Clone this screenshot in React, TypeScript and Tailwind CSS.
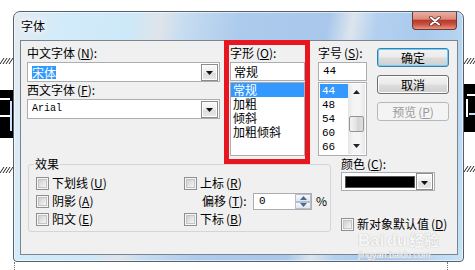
import React from 'react';

const cjk = "font-['Noto_Sans_CJK_SC',sans-serif]";

function Mn({ k }: { k: string }) {
  return (
    <span className="ml-[2px]">
      (<span className="underline underline-offset-[1px]">{k}</span>)
    </span>
  );
}

function DropButton({ className = '' }: { className?: string }) {
  return (
    <span
      className={`flex h-[17px] w-[17px] shrink-0 items-center justify-center border border-[#8c8c8c] bg-[linear-gradient(#fbfbfb,#ececec_50%,#dcdcdc_51%,#e8e8e8)] shadow-[inset_0_0_0_1px_#ffffff] ${className}`}
    >
      <svg width="7" height="4" viewBox="0 0 7 4" className="mt-[2px]">
        <path d="M0 0h7L3.5 4z" fill="#111" />
      </svg>
    </span>
  );
}

function Check() {
  return (
    <span className="flex h-[13px] w-[13px] shrink-0 items-center justify-center border border-[#8f8f8f] bg-[#f6f6f6]">
      <span className="h-[9px] w-[9px] border border-[#c4c4c4] bg-[linear-gradient(135deg,#cfcfcf,#f6f6f6)]" />
    </span>
  );
}

function Btn({ children, kind = 'normal' }: { children: React.ReactNode; kind?: 'default' | 'normal' | 'disabled' }) {
  const look =
    kind === 'default'
      ? 'border-[#3c7fb1] text-black shadow-[inset_0_0_0_1px_#6fd0f6] bg-[linear-gradient(#f4f4f4,#ebebeb_48%,#dddddd_52%,#cfcfcf)]'
      : kind === 'disabled'
        ? 'border-[#b4b8bb] text-[#9a9a9a] bg-[#f4f4f4]'
        : 'border-[#707070] text-black shadow-[inset_0_0_0_1px_#fcfcfc] bg-[linear-gradient(#f2f2f2,#ebebeb_48%,#dddddd_52%,#cfcfcf)]';
  return (
    <div className={`flex h-[19px] w-[72px] items-center justify-center rounded-[3px] border ${look}`}>
      {children}
    </div>
  );
}

function Hatch({ className }: { className: string }) {
  return (
    <svg width="13" height="6" viewBox="0 0 13 6" className={`absolute ${className}`}>
      <path d="M0 6L4 0M3 6L7 0M6 6L10 0M9 6L13 0" stroke="#222" strokeWidth="1" />
    </svg>
  );
}

function Backdrop() {
  return (
    <>
      <Hatch className="left-0 top-[58px]" />
      <Hatch className="left-0 top-[167px]" />
      <Hatch className="left-[464px] top-[58px]" />
      <Hatch className="left-[464px] top-[166px]" />
      <div className="absolute left-0 top-[90px] h-[48px] w-[13px] bg-black">
        <div className="mt-[8px] h-[2px] w-[10px] bg-white" />
        <div className="ml-[10px] mt-[1px] h-[30px] w-[2px] bg-[#cfe2ff]" />
        <div className="-mt-[16px] h-[2px] w-[10px] bg-white" />
      </div>
      <div className="absolute left-[463px] top-[84px] h-[48px] w-[12px] bg-black">
        <div className="ml-[4px] mt-[10px] h-[2px] w-[8px] bg-white" />
        <div className="ml-[3px] mt-[3px] h-[18px] w-[2px] bg-white" />
        <div className="ml-[6px] -mt-[4px] h-[2px] w-[6px] bg-[#bfe0ff]" />
      </div>
      <div className="absolute left-[14px] top-[262px] h-[8px] border-l border-dotted border-[#777]" />
      <div className="absolute left-[447px] top-[262px] h-[8px] border-l border-dotted border-[#777]" />
    </>
  );
}

function CloseButton() {
  return (
    <div className="ml-auto mr-[6px] flex h-[18px] w-[45px] items-center justify-center rounded-b-[4px] border border-t-0 border-[#6b3a35] bg-[linear-gradient(#eab0a4,#dc8a78_42%,#b8392c_50%,#c9503f_72%,#e7947f)]">
      <svg width="12" height="10" viewBox="0 0 12 10">
        <path d="M2 1.5L10 8.5M10 1.5L2 8.5" stroke="#5a2a25" strokeWidth="3.6" strokeLinecap="round" />
        <path d="M2 1.5L10 8.5M10 1.5L2 8.5" stroke="#ffffff" strokeWidth="2" strokeLinecap="round" />
      </svg>
    </div>
  );
}

function SizeList() {
  const sizes = ['44', '48', '54', '60', '66'];
  return (
    <div className="mt-[1px] flex h-[74px] border border-[#abadb3] bg-white p-[1px]">
      <div className="flex-1">
        {sizes.map((s, i) => (
          <div
            key={s}
            className={`h-[14px] pl-[2px] font-['Liberation_Mono',monospace] text-[11px] leading-[14px] ${i === 0 ? 'bg-[#3399ff] text-white' : ''}`}
          >
            {s}
          </div>
        ))}
      </div>
      <div className="flex w-[17px] flex-col bg-[linear-gradient(90deg,#e6e6e6,#f5f5f5_30%,#f5f5f5_70%,#e6e6e6)]">
        <div className="flex h-[16px] items-center justify-center">
          <svg width="7" height="4" viewBox="0 0 7 4">
            <path d="M0 4h7L3.5 0z" fill="#222" />
          </svg>
        </div>
        <div className="mx-[1px] mt-[16px] h-[16px] rounded-[2px] border border-[#959595] bg-[linear-gradient(90deg,#f3f3f3,#e2e2e2_50%,#d4d4d4_51%,#dedede)]" />
        <div className="mt-auto flex h-[16px] items-center justify-center">
          <svg width="7" height="4" viewBox="0 0 7 4">
            <path d="M0 0h7L3.5 4z" fill="#222" />
          </svg>
        </div>
      </div>
    </div>
  );
}

function Spinner() {
  return (
    <div className="flex h-[17px] w-[59px] border border-[#abadb3] bg-white">
      <span className="flex-1 pl-[5px] font-['Liberation_Mono',monospace] text-[11px] leading-[15px]">0</span>
      <div className="flex w-[16px] flex-col">
        {[0, 1].map((i) => (
          <div
            key={i}
            className="flex flex-1 items-center justify-center border border-[#b7c0ca] bg-[linear-gradient(#f7f9fb,#e0e6ec)]"
          >
            <svg width="7" height="4" viewBox="0 0 7 4">
              <path d={i === 0 ? 'M0 4h7L3.5 0z' : 'M0 0h7L3.5 4z'} fill="#4a6a98" />
            </svg>
          </div>
        ))}
      </div>
    </div>
  );
}

export default function App() {
  return (
    <div className={`relative h-[270px] w-[475px] overflow-hidden bg-white pl-[13px] pt-[11px] text-[12px] leading-[14px] text-black ${cjk}`}>
      <Backdrop />

      <div className="relative flex h-[251px] w-[451px] flex-col rounded-b-[4px] rounded-t-[7px] border border-[#56616c] bg-[linear-gradient(100deg,#e6ebf0_0%,#d2ebfa_10%,#cde8f8_24%,#dfe4ea_30%,#c6dcf1_35%,#adcbec_46%,#a8c7eb_64%,#dce5ee_69%,#b3d0ef_74%,#aac9ec_84%,#c6e3f7_100%)] shadow-[inset_0_0_0_1px_rgba(255,255,255,0.55)]">
        <div className="flex h-[28px] shrink-0 items-start">
          <span className="ml-[7px] mt-[7px] [text-shadow:0_0_6px_#ffffff,0_0_6px_#ffffff]">字体</span>
          <CloseButton />
        </div>

        <div className="ml-[6px] mr-[5px] h-[215px] border border-[#7a8590] bg-[#f0f0f0]">
          <div className="flex pl-[6px] pt-[5px]">
            <div className="w-[193px]">
              <div className="h-[16px]">
                中文字体<Mn k="N" />:
              </div>
              <div className="flex h-[20px] items-center border border-[#abadb3] bg-white pl-[4px] pr-[1px]">
                <span className="bg-[#3399ff] leading-[13px] text-white">宋体</span>
                <DropButton className="ml-auto" />
              </div>
              <div className="h-[17px] pt-[1px]">
                西文字体<Mn k="F" />:
              </div>
              <div className="flex h-[20px] items-center border border-[#abadb3] bg-white pl-[4px] pr-[1px]">
                <span className="font-['Liberation_Mono',monospace] text-[10px]">Arial</span>
                <DropButton className="ml-auto" />
              </div>
            </div>

            <div className="ml-[10px] w-[75px]">
              <div className="h-[16px]">
                字形<Mn k="O" />:
              </div>
              <div className="h-[19px] border border-[#abadb3] bg-white pl-[3px] pt-[2px]">常规</div>
              <div className="mt-[1px] h-[74px] border border-[#abadb3] bg-white">
                {['常规', '加粗', '倾斜', '加粗倾斜'].map((s, i) => (
                  <div key={s} className={`h-[14px] pl-[2px] ${i === 0 ? 'bg-[#3399ff] text-white' : ''}`}>
                    {s}
                  </div>
                ))}
              </div>
            </div>

            <div className="ml-[13px] w-[49px]">
              <div className="h-[16px]">
                字号<Mn k="S" />:
              </div>
              <div className="h-[19px] border border-[#abadb3] bg-white pl-[4px] font-['Liberation_Mono',monospace] text-[11px] leading-[17px]">
                44
              </div>
              <SizeList />
            </div>

            <div className="ml-[10px] flex flex-col gap-[8px] pt-[2px]">
              <Btn kind="default">确定</Btn>
              <Btn>取消</Btn>
              <Btn kind="disabled">
                预览<Mn k="P" />
              </Btn>
            </div>
          </div>

          <div className="mt-[1px] flex pl-[7px]">
            <div className="relative w-[303px] pt-[7px]">
              <span className="absolute left-[6px] top-0 bg-[#f0f0f0] px-[1px]">效果</span>
              <div className="h-[68px] rounded-[3px] border border-[#d5d5d5] pl-[7px] pt-[12px]">
                <div className="grid grid-cols-[148px_1fr] grid-rows-[18px_18px_18px]">
                  <div className="flex items-start gap-[3px]">
                    <Check />
                    <span className="-mt-[1px]">
                      下划线<Mn k="U" />
                    </span>
                  </div>
                  <div className="flex items-start gap-[3px]">
                    <Check />
                    <span className="-mt-[1px]">
                      上标<Mn k="R" />
                    </span>
                  </div>
                  <div className="flex items-start gap-[3px]">
                    <Check />
                    <span className="-mt-[1px]">
                      阴影<Mn k="A" />
                    </span>
                  </div>
                  <div className="-mt-[2px] flex items-start">
                    <span className="ml-[18px] w-[51px] pt-[1px]">
                      偏移<Mn k="T" />:
                    </span>
                    <Spinner />
                    <span className="ml-[4px] pt-[1px]">%</span>
                  </div>
                  <div className="flex items-start gap-[3px]">
                    <Check />
                    <span className="-mt-[1px]">
                      阳文<Mn k="E" />
                    </span>
                  </div>
                  <div className="flex items-start gap-[3px]">
                    <Check />
                    <span className="-mt-[1px]">
                      下标<Mn k="B" />
                    </span>
                  </div>
                </div>
              </div>
            </div>

            <div className="ml-[10px] flex flex-col">
              <div className="h-[15px]">
                颜色<Mn k="C" />:
              </div>
              <div className="flex h-[19px] w-[94px] items-center border border-[#abadb3] bg-white pl-[3px] pr-[1px]">
                <span className="h-[12px] w-[70px] border border-[#555] bg-black" />
                <DropButton className="ml-auto h-[15px]" />
              </div>
              <div className="mt-[27px] flex items-start gap-[3px]">
                <Check />
                <span className="-mt-[1px]">
                  新对象默认值<Mn k="D" />
                </span>
              </div>
            </div>
          </div>
        </div>
      </div>

      <div className="absolute left-[358px] top-[232px] flex flex-col items-start text-[#f6f6f6] [text-shadow:0_0_1px_#c4c4c4,0_0_1px_#c4c4c4]">
        <div className="flex items-baseline font-['Liberation_Sans',sans-serif] text-[17px] font-bold leading-[16px]">
          Bai<span className="ml-[2px]">du</span>
          <span className={`ml-[2px] ${cjk} text-[15px]`}>经验</span>
        </div>
        <div className="mt-[1px] font-['Liberation_Sans',sans-serif] text-[9px] leading-[10px]">jingyan.baidu.com</div>
      </div>

      <div className="absolute left-[224px] top-[40px] h-[124px] w-[86px] border-[5px] border-[#e8161f]" />
    </div>
  );
}
